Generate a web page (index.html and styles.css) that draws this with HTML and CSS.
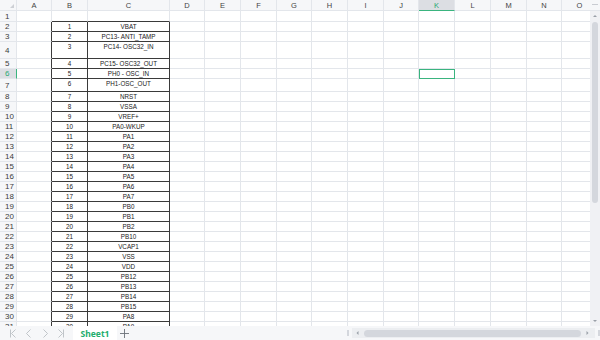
FILE: index.html
```html
<!DOCTYPE html>
<html lang="en">
<head>
    <meta charset="UTF-8">
    <meta name="viewport" content="width=device-width, initial-scale=1.0">
    <title>Sheet1</title>
    <link rel="stylesheet" href="styles.css">
</head>
<body>
    <div class="app">
        <div class="main">
            <div class="sheet" id="sheet"></div>
            <div class="vscroll">
                <div class="vs-corner"><span></span></div>
                <svg class="vs-arrow" width="6" height="6" viewBox="0 0 6 6"><path d="M1 4 L3 2 L5 4 Z" fill="#9aa0a8"/></svg>
                <div class="vs-thumb"></div>
                <div class="vs-space"></div>
                <svg class="vs-arrow" width="6" height="6" viewBox="0 0 6 6"><path d="M1 2 L3 4 L5 2 Z" fill="#9aa0a8"/></svg>
            </div>
        </div>
        <div class="tabbar">
            <div class="nav">
                <svg width="8" height="9" viewBox="0 0 8 9"><path d="M1.5 0.5 V8.5 M6.5 0.5 L2.5 4.5 L6.5 8.5" fill="none" stroke="#b3b7bd" stroke-width="0.8"/></svg>
                <svg width="8" height="9" viewBox="0 0 8 9"><path d="M5.5 0.5 L1.5 4.5 L5.5 8.5" fill="none" stroke="#b3b7bd" stroke-width="0.8"/></svg>
                <svg width="8" height="9" viewBox="0 0 8 9"><path d="M2.5 0.5 L6.5 4.5 L2.5 8.5" fill="none" stroke="#b3b7bd" stroke-width="0.8"/></svg>
                <svg width="8" height="9" viewBox="0 0 8 9"><path d="M1.5 0.5 L5.5 4.5 L1.5 8.5 M6.5 0.5 V8.5" fill="none" stroke="#b3b7bd" stroke-width="0.8"/></svg>
            </div>
            <div class="tab">Sheet1</div>
            <svg class="add" width="9" height="9" viewBox="0 0 9 9"><path d="M4.5 0 V9 M0 4.5 H9" fill="none" stroke="#6b7078" stroke-width="0.9"/></svg>
            <div class="hscroll">
                <div class="hs-sep"></div>
                <div class="hs-track">
                    <svg width="5" height="6" viewBox="0 0 5 6"><path d="M3.5 1 L1.5 3 L3.5 5 Z" fill="#9aa0a8"/></svg>
                    <div class="hs-thumb"></div>
                    <svg width="5" height="6" viewBox="0 0 5 6"><path d="M1.5 1 L3.5 3 L1.5 5 Z" fill="#9aa0a8"/></svg>
                </div>
                <div class="hs-sep"></div>
            </div>
        </div>
    </div>

    <script>
        const pins = [
            'VBAT', 'PC13- ANTI_TAMP', 'PC14- OSC32_IN', 'PC15- OSC32_OUT', 'PH0 - OSC_IN',
            'PH1-OSC_OUT', 'NRST', 'VSSA', 'VREF+', 'PA0-WKUP', 'PA1', 'PA2', 'PA3', 'PA4',
            'PA5', 'PA6', 'PA7', 'PB0', 'PB1', 'PB2', 'PB10', 'VCAP1', 'VSS', 'VDD',
            'PB12', 'PB13', 'PB14', 'PB15', 'PA8', 'PA9'
        ];
        const letters = 'ABCDEFGHIJKLMNO'.split('');
        const sheet = document.getElementById('sheet');

        function addCell(cls, text) {
            const el = document.createElement('div');
            el.className = 'cell ' + cls;
            if (text !== '') el.textContent = text;
            sheet.appendChild(el);
        }

        addCell('corner', '');
        letters.forEach(l => addCell('colhead' + (l === 'K' ? ' active' : ''), l));

        for (let r = 1; r <= 31; r++) {
            addCell('rowhead' + (r === 6 ? ' active' : ''), r);
            letters.forEach(l => {
                let cls = '';
                let text = '';
                if (r >= 2 && l === 'A') cls = 'edge-left';
                if (r === 1 && (l === 'B' || l === 'C')) cls = 'edge-top';
                if (r >= 2 && l === 'B') { cls = 'pin'; text = r - 1; }
                if (r >= 2 && l === 'C') { cls = 'pin'; text = pins[r - 2]; }
                if (r === 6 && l === 'K') cls = 'selected';
                addCell(cls, text);
            });
        }
    </script>
</body>
</html>
```

FILE: styles.css
```css
body {
    margin: 0;
    background: #fff;
    font-family: "Liberation Sans", Arial, sans-serif;
    color: #333;
    overflow: hidden;
}
.app {
    width: 600px;
    height: 340px;
    display: flex;
    flex-direction: column;
}
.main {
    height: 326px;
    display: flex;
    overflow: hidden;
}
.sheet {
    width: 590px;
    flex: none;
    display: grid;
    grid-template-columns: 17px 35px 36px 82px 35px 36px 36px 35px 36px 36px 35px 36px 36px 36px 35px 36px;
    grid-template-rows: 11px 11px 10px 10px 17px 10px 10px 13px repeat(24, 10px);
    overflow: hidden;
}
.cell {
    box-sizing: border-box;
    border-right: 1px solid #e3e6eb;
    border-bottom: 1px solid #e3e6eb;
    min-width: 0;
}
.corner {
    background: #f6f7f9;
    display: flex;
    justify-content: flex-end;
    align-items: flex-end;
    padding: 0 2px 2px 0;
}
.corner::after {
    content: "";
    width: 0;
    height: 0;
    border-left: 4px solid transparent;
    border-bottom: 4px solid #cdd0d5;
}
.colhead {
    background: #f6f7f9;
    font-size: 7.5px;
    color: #444;
    display: flex;
    align-items: center;
    justify-content: center;
}
.colhead.active {
    background: #dcdee3;
    color: #2aa874;
    border-bottom: 1px solid #3ab47f;
}
.rowhead {
    background: #f6f7f9;
    font-size: 8px;
    color: #3c3c3c;
    display: flex;
    align-items: center;
    padding-left: 5px;
}
.rowhead.active {
    background: #dcdee3;
    color: #2aa874;
    border-right: 1px solid #3ab47f;
}
.edge-left {
    border-right-color: #3a3a3a;
}
.edge-top {
    border-bottom-color: #3a3a3a;
}
.pin {
    border-right-color: #3a3a3a;
    border-bottom-color: #3a3a3a;
    font-size: 6.3px;
    line-height: 9px;
    text-align: center;
    color: #222;
    white-space: nowrap;
}
.selected {
    border: 1px solid #3ab47f;
}
.vscroll {
    width: 10px;
    flex: none;
    background: #f0f1f4;
    display: flex;
    flex-direction: column;
    align-items: center;
}
.vs-corner {
    width: 10px;
    height: 11px;
    background: #f6f7f9;
    border-bottom: 1px solid #e3e6eb;
    box-sizing: border-box;
    display: flex;
    justify-content: center;
    padding-top: 4px;
}
.vs-corner span {
    width: 6px;
    height: 1px;
    background: #c9ccd2;
}
.vs-arrow {
    margin: 2px 0;
}
.vs-thumb {
    width: 6px;
    height: 181px;
    margin-top: 1px;
    border-radius: 3px;
    background: #d4d7dd;
}
.vs-space {
    flex: 1;
}
.tabbar {
    height: 14px;
    background: #f6f7f9;
    display: flex;
    align-items: center;
}
.nav {
    display: flex;
    gap: 8px;
    padding-left: 9px;
    width: 64px;
}
.tab {
    width: 44px;
    height: 14px;
    background: #fff;
    color: #22ad6e;
    font-family: "Noto Sans", sans-serif;
    font-weight: bold;
    font-size: 8.5px;
    display: flex;
    align-items: center;
    justify-content: center;
}
.add {
    margin-left: 3px;
}
.hscroll {
    margin-left: auto;
    width: 253px;
    display: flex;
    align-items: center;
    gap: 3px;
}
.hs-sep {
    width: 2px;
    height: 6px;
    background: #d4d7dd;
}
.hs-track {
    flex: 1;
    height: 10px;
    background: #eceef1;
    display: flex;
    align-items: center;
    gap: 4px;
    padding: 0 5px 0 3px;
}
.hs-thumb {
    flex: 1;
    height: 7px;
    border-radius: 4px;
    background: #d4d7dd;
}
```
